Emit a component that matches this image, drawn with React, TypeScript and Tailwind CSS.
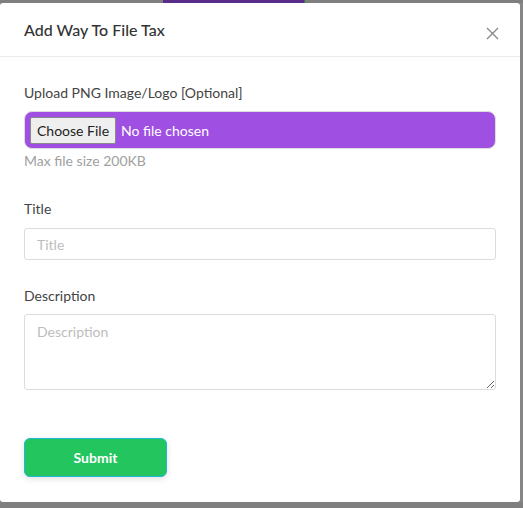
export default function App() {
  return (
    <div className="relative h-[508px] w-[523px] overflow-hidden bg-[#7f7f7f] font-['Lato','Noto_Sans',sans-serif]">
      {/* page behind the overlay, barely visible */}
      <div className="flex h-[3px] items-start">
        <div className="w-[163px]" />
        <div className="h-[3px] w-[141px] bg-[#5a2d8a]" />
        <div className="h-[3px] w-[1px] bg-[#2d7a3a]" />
      </div>

      <div className="flex">
        <div className="flex h-[499px] w-[520px] flex-col rounded-[3px] bg-white">
          <div className="flex h-[54px] items-center justify-between border-b border-[#e9ecef] pl-6 pr-6">
            <h1 className="text-[16px] font-medium text-[#333]">Add Way To File Tax</h1>
            <svg width="13" height="13" viewBox="0 0 13 13" className="mt-2 mr-[-3px]">
              <path d="M1 1L12 12M12 1L1 12" stroke="#888" strokeWidth="1.3" />
            </svg>
          </div>

          <div className="flex flex-col px-6 pt-[25px]">
            <label className="text-[14px] text-[#444]">Upload PNG Image/Logo [Optional]</label>
            <div className="mt-[8px] flex h-[38px] items-center gap-[5px] rounded-[8px] border border-[#ddd] bg-[#a04fe3] px-[5px]">
              <span className="flex h-[27px] items-center rounded-[2px] border border-[#8a8a8a] bg-[#efefef] px-[6px] text-[14px] text-[#222]">
                Choose File
              </span>
              <span className="text-[14px] text-white">No file chosen</span>
            </div>
            <p className="mt-[1px] text-[14px] text-[#a0a0a0]">Max file size 200KB</p>

            <label className="mt-[27px] text-[14px] text-[#444]">Title</label>
            <input
              placeholder="Title"
              className="mt-[9px] h-[32px] rounded-[3px] border border-[#dcdcdc] px-3 text-[14px] outline-none placeholder:text-[#bdbdbd]"
            />

            <label className="mt-[25px] text-[14px] text-[#444]">Description</label>
            <textarea
              placeholder="Description"
              className="mt-[8px] h-[76px] rounded-[3px] border border-[#dcdcdc] px-3 py-[6px] text-[14px] outline-none placeholder:text-[#bdbdbd]"
            />

            <button className="mt-[48px] h-[39px] w-[143px] rounded-[6px] border border-[#1fb8d6] bg-[#22c55e] text-[14px] font-bold text-white shadow-[0_2px_6px_rgba(0,0,0,0.12)]">
              Submit
            </button>
          </div>
        </div>
        <div className="w-[3px] bg-[#868686]" />
      </div>
    </div>
  );
}
